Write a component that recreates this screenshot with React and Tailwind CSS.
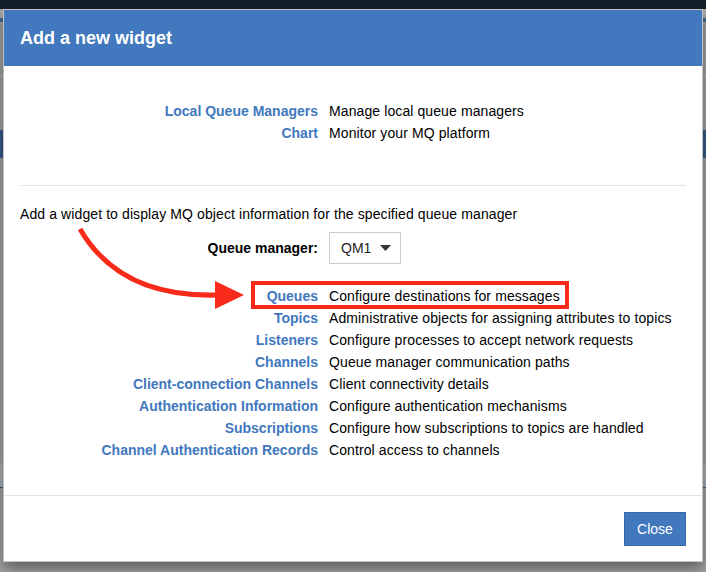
import React from "react";

const rows = [
  ["Queues", "Configure destinations for messages"],
  ["Topics", "Administrative objects for assigning attributes to topics"],
  ["Listeners", "Configure processes to accept network requests"],
  ["Channels", "Queue manager communication paths"],
  ["Client-connection Channels", "Client connectivity details"],
  ["Authentication Information", "Configure authentication mechanisms"],
  ["Subscriptions", "Configure how subscriptions to topics are handled"],
  ["Channel Authentication Records", "Control access to channels"],
];

const Row = ({ label, text }) => (
  <>
    <a className="text-right font-bold text-[#4178be] cursor-pointer">{label}</a>
    <span className="text-black tracking-[0.1px]">{text}</span>
  </>
);

export default function App() {
  return (
    <div
      className="relative w-[706px] h-[572px] overflow-hidden bg-[#a3a3a3] text-[14px] leading-[22px]"
      style={{ fontFamily: '"Liberation Sans", Arial, sans-serif' }}
    >
      {/* page behind the overlay */}
      <div className="flex flex-col">
        <div className="h-[9px] bg-[#13202b]" />
        <div className="h-[9px] bg-[#a7a9ab]" />
        <div className="h-[4px] bg-[#4a6a96]" />
        <div className="h-[53px]" />
        <div className="h-px bg-[#bdbdbd]" />
        <div className="h-[54px]" />
        <div className="h-[28px] bg-[#3a5b8a]" />
        <div className="h-[305px]" />
        <div className="h-[24px] bg-[#abb1b5]" />
        <div className="h-px bg-[#3d5a80]" />
      </div>

      {/* modal */}
      <div className="absolute left-[3px] top-[9px] w-[700px] h-[553px] flex flex-col bg-white border border-[#c4c4c4] shadow-[0_6px_14px_rgba(0,0,0,0.45)]">
        <div className="h-[56px] shrink-0 bg-[#4178be] flex items-center px-4">
          <h2 className="text-white font-bold text-[18px]">Add a new widget</h2>
        </div>

        <div className="flex-1 px-4 pt-[34px]">
          <div className="grid grid-cols-[298px_1fr] gap-x-[11px]">
            <Row label="Local Queue Managers" text="Manage local queue managers" />
            <Row label="Chart" text="Monitor your MQ platform" />
          </div>

          <div className="mt-[41px] h-px bg-[#e3e3e3]" />

          <p className="mt-[17px] text-black tracking-[0.1px]">
            Add a widget to display MQ object information for the specified queue manager
          </p>

          <div className="mt-[7px] grid grid-cols-[298px_1fr] gap-x-[11px] items-center">
            <span className="text-right font-bold text-black">Queue manager:</span>
            <div className="w-[72px] h-[32px] border border-[#cccccc] flex items-center pl-[11px] gap-[9px]">
              <span className="text-[#222]">QM1</span>
              <svg width="11" height="6" viewBox="0 0 11 6">
                <path d="M0 0 L11 0 L5.5 6 Z" fill="#333" />
              </svg>
            </div>
          </div>

          <div className="mt-[21px] grid grid-cols-[298px_1fr] gap-x-[11px]">
            {rows.map(([l, t]) => (
              <Row key={l} label={l} text={t} />
            ))}
          </div>
        </div>

        <div className="h-[66px] shrink-0 border-t border-[#e3e3e3] flex items-center justify-end px-4">
          <button className="w-[62px] h-[34px] bg-[#4178be] border border-[#3768a8] text-white">
            Close
          </button>
        </div>
      </div>

      {/* annotation */}
      <div className="absolute left-[251px] top-[281px] w-[318px] h-[28px] border-[4px] border-[#f82a1a]" />
      <svg className="absolute left-0 top-0" width="706" height="572">
        <path d="M80 229 Q120 298 218 295" fill="none" stroke="#f82a1a" strokeWidth="5" />
        <path d="M215 281 L244 295 L215 309 Z" fill="#f82a1a" />
      </svg>
    </div>
  );
}
